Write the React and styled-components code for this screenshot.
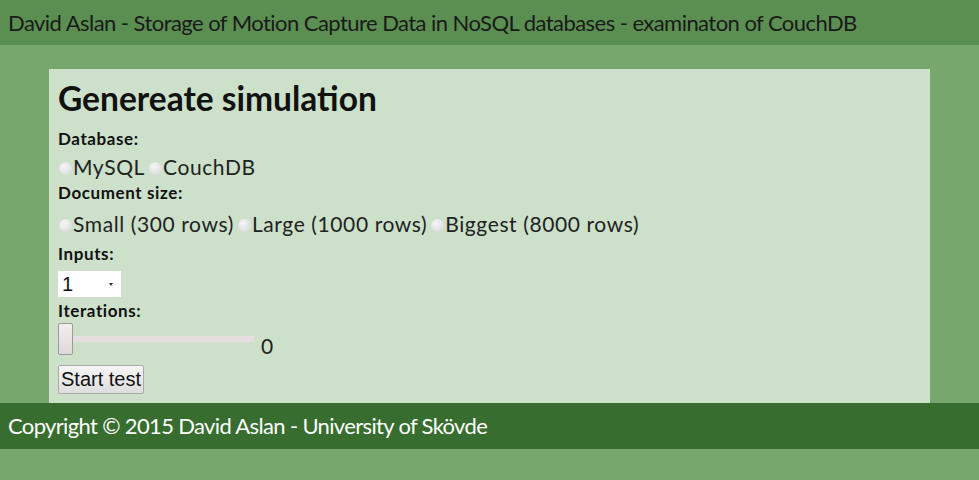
import React, { useState } from "react";
import styled, { createGlobalStyle } from "styled-components";

const GlobalStyle = createGlobalStyle`
  html, body {
    margin: 0;
    padding: 0;
    background: #77a76c;
    font-family: Lato, "Open Sans", sans-serif;
  }
`;

const Header = styled.header`
  height: 45px;
  background: #5a8f51;
  color: #1a1a1a;
  font-size: 22px;
  letter-spacing: -0.55px;
  line-height: 45px;
  padding-left: 8px;
  white-space: nowrap;
  overflow: hidden;
`;

const Main = styled.main`
  padding: 24px 49px 0 49px;
`;

const Panel = styled.section`
  background: #cce0ca;
  padding: 9px 9px 9px;
  display: flex;
  flex-direction: column;
  align-items: flex-start;
`;

const Title = styled.h1`
  margin: 0 0 11px;
  font-size: 33.5px;
  font-weight: bold;
  color: #111;
  line-height: 40px;
`;

const Label = styled.div`
  margin-top: ${(p) => p.$top || 0}px;
  font-size: 17px;
  letter-spacing: 0.6px;
  font-weight: bold;
  color: #111;
  line-height: 20px;
`;

const RadioRow = styled.div`
  margin-top: ${(p) => p.$top || 0}px;
  display: flex;
  align-items: center;
  font-size: 21px;
  letter-spacing: 0.6px;
  color: #222;
  line-height: 30px;
`;

const Radio = styled.input.attrs({ type: "radio" })`
  appearance: none;
  width: 13px;
  height: 13px;
  margin: 2px 1px 0 1px;
  border-radius: 50%;
  background: radial-gradient(circle at 40% 35%, #f6f6f6, #d4d4d4);
  border: none;
`;

const Option = styled.label`
  display: flex;
  align-items: center;
  margin-right: 3px;
`;

const SelectWrap = styled.div`
  position: relative;
  margin-top: 7px;
  &::after {
    content: "";
    position: absolute;
    right: 8px;
    top: 12px;
    border-left: 2px solid transparent;
    border-right: 2px solid transparent;
    border-top: 3px solid #333;
    pointer-events: none;
  }
`;

const Select = styled.select`
  appearance: none;
  display: block;
  width: 63px;
  height: 26px;
  margin: 0;
  font-family: "Liberation Sans", Arial, sans-serif;
  font-size: 20px;
  color: #111;
  border: none;
  border-radius: 0;
  background: #fff;
  padding: 0 4px;
`;

const SliderRow = styled.div`
  display: flex;
  align-items: flex-end;
  gap: 7px;
  margin-top: 2px;
`;

const Range = styled.input.attrs({ type: "range" })`
  appearance: none;
  width: 196px;
  height: 32px;
  margin: 0;
  background: transparent;
  &::-webkit-slider-runnable-track {
    height: 6px;
    background: #e6dede;
  }
  &::-webkit-slider-thumb {
    appearance: none;
    width: 15px;
    height: 32px;
    margin-top: -13px;
    background: linear-gradient(#f3eded, #e0d8d8);
    border: 1px solid #9a9a9a;
    border-radius: 2px;
  }
`;

const Value = styled.span`
  font-size: 21px;
  color: #222;
  line-height: 18px;
`;

const Button = styled.button`
  margin-top: 10px;
  font-family: "Liberation Sans", Arial, sans-serif;
  font-size: 20px;
  height: 29px;
  padding: 0 2px;
  background: linear-gradient(#f6f6f6, #dddddd);
  border: 1px solid #aaa;
  border-radius: 2px;
  color: #111;
`;

const Footer = styled.footer`
  height: 46px;
  background: #376d2e;
  color: #fff;
  font-size: 22px;
  letter-spacing: -0.65px;
  line-height: 46px;
  padding-left: 8px;
`;

const App = () => {
  const [iterations, setIterations] = useState(0);

  return (
    <>
      <GlobalStyle />
      <Header>
        David Aslan - Storage of Motion Capture Data in NoSQL databases - examinaton of CouchDB
      </Header>
      <Main>
        <Panel>
          <Title>Genereate simulation</Title>
          <Label>Database:</Label>
          <RadioRow $top={3}>
            <Option><Radio name="db" />MySQL</Option>
            <Option><Radio name="db" />CouchDB</Option>
          </RadioRow>
          <Label $top={1}>Document size:</Label>
          <RadioRow $top={6}>
            <Option><Radio name="size" />Small (300 rows)</Option>
            <Option><Radio name="size" />Large (1000 rows)</Option>
            <Option><Radio name="size" />Biggest (8000 rows)</Option>
          </RadioRow>
          <Label $top={5}>Inputs:</Label>
          <SelectWrap>
            <Select defaultValue="1">
              <option>1</option>
              <option>2</option>
              <option>3</option>
            </Select>
          </SelectWrap>
          <Label $top={4}>Iterations:</Label>
          <SliderRow>
            <Range
              min="0"
              max="100"
              value={iterations}
              onChange={(e) => setIterations(e.target.value)}
            />
            <Value>{iterations}</Value>
          </SliderRow>
          <Button>Start test</Button>
        </Panel>
      </Main>
      <Footer>Copyright © 2015 David Aslan - University of Skövde</Footer>
    </>
  );
};

export default App;
